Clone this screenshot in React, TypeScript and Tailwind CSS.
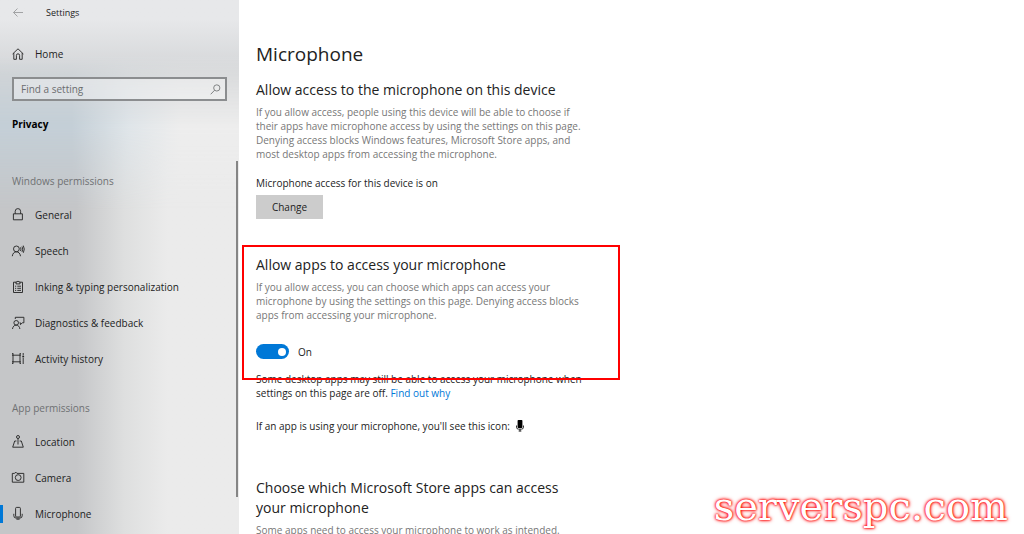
import type { ReactNode } from 'react'

interface NavItem {
  label: string
  icon: ReactNode
  active?: boolean
}

interface IconProps {
  children: ReactNode
}

function Icon({ children }: IconProps) {
  return (
    <svg
      viewBox="0 0 12 12"
      className="w-3 h-3 shrink-0 overflow-visible"
      fill="none"
      stroke="currentColor"
      strokeWidth="0.9"
      aria-hidden="true"
    >
      {children}
    </svg>
  )
}

const homeIcon = (
  <Icon>
    <path d="M0.6 6 6 0.8 11.4 6M1.8 5v6.3h2.6V7.4a1.6 1.6 0 0 1 3.2 0v3.9h2.6V5" />
  </Icon>
)

const windowsPermissions: NavItem[] = [
  {
    label: 'General',
    icon: (
      <Icon>
        <path d="M1.4 4.8h9v6h-9zM3.2 4.8V2.3a2.7 2.7 0 0 1 5.4 0v2.5" />
      </Icon>
    ),
  },
  {
    label: 'Speech',
    icon: (
      <Icon>
        <circle cx="4.4" cy="3.9" r="2.9" />
        <path d="M0.3 11.2C0.6 8.5 2.2 6.8 4.4 6.8s3.8 1.7 4.1 4.4M8.5 2.4q1 1.7 0 3.6M10 1.5q1.5 2.7 0 5.4M11.3 0.6q2 3.6 0 7.2" />
      </Icon>
    ),
  },
  {
    label: 'Inking & typing personalization',
    icon: (
      <Icon>
        <path d="M4 1.2H1.5v10.3h9V1.2H8M4 0.9h1L6 0l1 0.9h1v2H4zM3 5.2h1.2M5.3 5.2H9M3 7.3h1.2M5.3 7.3H9M3 9.4h1.2M5.3 9.4H9" />
      </Icon>
    ),
  },
  {
    label: 'Diagnostics & feedback',
    icon: (
      <Icon>
        <circle cx="4.2" cy="5.8" r="2.3" />
        <path d="M0.5 12C0.8 9.6 2.2 8.1 4.2 8.1S7.6 9.6 7.9 12M3.3 2V0.3h8.6v5.5h-1.6L8.4 7.7V5.8H7.6" />
      </Icon>
    ),
  },
  {
    label: 'Activity history',
    icon: (
      <Icon>
        <path d="M0 2.2h8.8M0 8.8h8.8M1 0.2v10.6M8 0.2v10.6M0 0.7h1M8 0.7h0.9M0 10.4h1M8 10.4h0.9M11.2 0v2.4M11.2 5v6" />
        <path d="M10.3 3.6h1.8" strokeWidth="1.6" />
      </Icon>
    ),
  },
]

const appPermissions: NavItem[] = [
  {
    label: 'Location',
    icon: (
      <Icon>
        <circle cx="6" cy="1" r="1.5" />
        <path d="M6 2.5v6M4.4 5H2.7L0.7 11.2h10.6L9.3 5H7.6" />
      </Icon>
    ),
  },
  {
    label: 'Camera',
    icon: (
      <Icon>
        <path d="M0.3 1.4h2.2l0.6-0.8h1.3l0.6 0.8h6.8v8.8H0.3z" />
        <circle cx="6.2" cy="5.6" r="2.9" />
      </Icon>
    ),
  },
  {
    label: 'Microphone',
    active: true,
    icon: (
      <Icon>
        <rect x="3.6" y="-0.6" width="4.8" height="9.6" rx="1" />
        <path d="M1.8 5.8v1.9q0 2.4 2.4 2.4h3.6q2.4 0 2.4-2.4V5.8M4.4 11.2h3.2" />
      </Icon>
    ),
  },
]

interface NavGroupProps {
  title: string
  items: NavItem[]
}

function NavGroup({ title, items }: NavGroupProps) {
  return (
    <section>
      <h2 className="h-6 px-3 text-[#6f7173]">{title}</h2>
      <ul>
        {items.map((item) => (
          <li key={item.label}>
            <a href="#" className="relative flex items-center gap-[11px] h-9 px-3">
              {item.active && <span className="absolute left-0 w-[3px] h-[18px] bg-[#0078d7]" />}
              {item.icon}
              {item.label}
            </a>
          </li>
        ))}
      </ul>
    </section>
  )
}

function Sidebar() {
  return (
    <aside className="relative w-[239px] shrink-0 text-[10px] leading-4 text-[#222] bg-[#ebebeb]">
      {/* blurred wallpaper showing through the pane */}
      <div className="absolute inset-0 bg-linear-to-r from-[#c5c6c8] from-32% via-[#dedfdf] via-52% to-[#ebebeb] to-70%" />
      <div className="absolute inset-x-0 top-0 h-[210px] bg-linear-to-r from-[#c4cfd7] from-30% via-[#dfe5e9] via-54% to-[#ededed] to-75% mask-b-from-60%" />
      <div className="absolute inset-x-0 top-0 h-[125px] bg-linear-to-b from-[#e7e8ea] from-15% to-[#d3d5d7] to-60% mask-b-from-45%" />

      <div className="relative">
        <header className="flex items-center gap-[22px] h-[25px] px-3 text-[9px]">
          <button type="button" aria-label="Back" className="text-[#9a9b9d]">
            <Icon>
              <path d="M11 5.5H1.5M5.5 1.5l-4 4 4 4" />
            </Icon>
          </button>
          <h1>Settings</h1>
        </header>

        <a href="#" className="flex items-center gap-[11px] h-9 mt-[11px] px-3">
          {homeIcon}
          Home
        </a>

        <form className="flex items-center h-6 mx-3 mt-[5px] pl-[7px] pr-1 border-2 border-[#8b8d8f] bg-white/35">
          <input
            type="text"
            aria-label="Find a setting"
            placeholder="Find a setting"
            className="flex-1 min-w-0 bg-transparent outline-none placeholder:text-[#6b6d6f]"
          />
          <svg viewBox="0 0 12 12" className="w-[11px] h-[11px] text-[#77797b]" fill="none" stroke="currentColor" aria-hidden="true">
            <circle cx="7.4" cy="4.3" r="3.4" />
            <path d="M5 6.8 0.8 11.2" />
          </svg>
        </form>

        <h2 className="mt-[15px] px-3 font-bold text-black">Privacy</h2>

        <nav className="flex flex-col gap-[23px] mt-[41px]">
          <NavGroup title="Windows permissions" items={windowsPermissions} />
          <NavGroup title="App permissions" items={appPermissions} />
        </nav>
      </div>

      <div className="absolute right-px top-[161px] w-[2px] h-[336px] bg-[#858585]" />
    </aside>
  )
}

export default function App() {
  return (
    <div className="relative flex h-screen overflow-hidden bg-white font-['Open_Sans','Noto_Sans',sans-serif]">
      <Sidebar />

      <main className="flex-1 min-w-0 pl-[17px] pt-10 text-[10px] leading-[14px] text-[#222]">
        <div className="max-w-[326px]">
          <h1 className="text-[19px] leading-7">Microphone</h1>

          <section className="mt-3">
            <h2 className="text-sm leading-5">Allow access to the microphone on this device</h2>
            <p className="mt-[5px] text-[#777]">
              If you allow access, people using this device will be able to choose if
              <br />
              their apps have microphone access by using the settings on this page.
              <br />
              Denying access blocks Windows features, Microsoft Store apps, and
              <br />
              most desktop apps from accessing the microphone.
            </p>
            <p className="mt-[15px]">Microphone access for this device is on</p>
            <button type="button" className="w-[67px] h-6 mt-[5px] bg-[#ccc]">
              Change
            </button>
          </section>

          <section className="relative mt-9">
            <div className="absolute -left-[14px] -right-[38px] -top-[10px] h-[135px] border-2 border-[#f00] pointer-events-none" />
            <h2 className="text-sm leading-5">Allow apps to access your microphone</h2>
            <p className="mt-[5px] text-[#777]">
              If you allow access, you can choose which apps can access your
              <br />
              microphone by using the settings on this page. Denying access blocks
              <br />
              apps from accessing your microphone.
            </p>
            <label className="flex items-center gap-[9px] mt-[22px]">
              <input
                type="checkbox"
                role="switch"
                defaultChecked
                className="appearance-none flex items-center w-[33px] h-[15px] px-[3px] rounded-full bg-[#999] checked:bg-[#0078d7] checked:justify-end before:w-2 before:h-2 before:rounded-full before:bg-white"
              />
              On
            </label>
            <p className="mt-[13px]">
              Some desktop apps may still be able to access your microphone when
              <br />
              settings on this page are off.{' '}
              <a href="#" className="text-[#0078d7]">
                Find out why
              </a>
            </p>
            <p className="flex items-center gap-[6px] mt-[19px]">
              If an app is using your microphone, you'll see this icon:
              <svg viewBox="0 0 8 12" className="w-2 h-3 text-black" fill="none" stroke="currentColor" aria-hidden="true">
                <rect x="1.6" y="0" width="4.8" height="8" rx="0.8" fill="currentColor" stroke="none" />
                <path d="M0.5 5.5v1.7q0 1.9 1.9 1.9h3.2q1.9 0 1.9-1.9V5.5M4 9v2.4M2.6 11h2.8" strokeWidth="0.8" />
              </svg>
            </p>
          </section>

          <section className="mt-[45px]">
            <h2 className="text-sm leading-5">
              Choose which Microsoft Store apps can access
              <br />
              your microphone
            </h2>
            <p className="mt-[5px] text-[#777]">Some apps need to access your microphone to work as intended.</p>
          </section>
        </div>
      </main>

      <div className="absolute right-4 bottom-1 font-['DejaVu_Serif',serif] text-[40px] leading-[48px] text-white [text-shadow:0_0_2px_#f00,0_0_3px_#f00,0_0_4px_#f33]">
        serverspc.com
      </div>
    </div>
  )
}
